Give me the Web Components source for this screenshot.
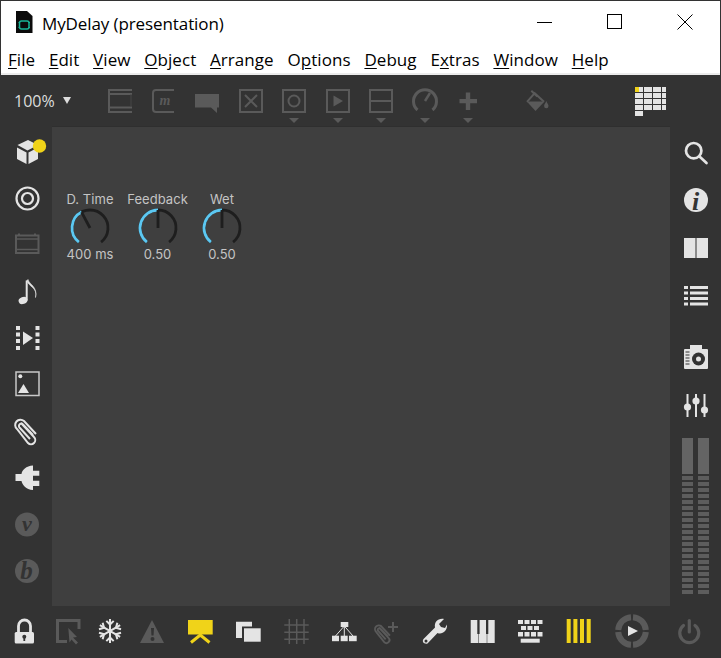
<!DOCTYPE html>
<html>
<head>
<meta charset="utf-8">
<title>MyDelay</title>
<style>
html, body { margin: 0; height: 100%; background: #333; }
</style>
</head>
<body>
<max-window>
  <win-titlebar slot="title">MyDelay (presentation)</win-titlebar>
  <win-menubar slot="menu"></win-menubar>
  <max-toolbar slot="toolbar"></max-toolbar>
  <max-sidebar slot="left" side="left"></max-sidebar>
  <max-canvas slot="canvas">
    <live-dial label="D. Time" value="400 ms" angle="-28"></live-dial>
    <live-dial label="Feedback" value="0.50" angle="0" style="margin-left:7.5px"></live-dial>
    <live-dial label="Wet" value="0.50" angle="0" style="margin-left:4.5px"></live-dial>
  </max-canvas>
  <max-sidebar slot="right" side="right"></max-sidebar>
  <max-footer slot="footer"></max-footer>
</max-window>

<script>
const WHITE = "#e4e4e4";
const DIM = "#5a5a5a";
const YELLOW = "#f0d319";
const BG = "#333";

// icons are drawn in a 32x32 box, centre at 16,16
const BOX = `<rect x="5" y="5" width="22" height="22" fill="none" stroke="${DIM}" stroke-width="2"/>`;
const ICONS = {
  strip: `<g fill="none" stroke="${DIM}"><path d="M4 5H28M4 9H28M4 22.500H28M4 27H28" stroke-width="2"/><path d="M5 5V27" stroke-width="2"/><path d="M27 9V22" stroke="#474747"/></g>`,
  message: `<path d="M26 5H8a3 3 0 0 0-3 3V24a3 3 0 0 0 3 3H26" fill="none" stroke="${DIM}" stroke-width="2"/><text x="17" y="20" font-family="Liberation Serif" font-style="italic" font-weight="700" font-size="14" text-anchor="middle" fill="${DIM}">m</text>`,
  comment: `<path d="M4 9H28V22.500H26V28L20 22.500H4Z" fill="${DIM}"/>`,
  xbox: `${BOX}<path d="M10 10L22 22M22 10L10 22" stroke="${DIM}" stroke-width="2"/>`,
  circlebox: `${BOX}<circle cx="16" cy="16" r="5.500" fill="none" stroke="${DIM}" stroke-width="2"/>`,
  playbox: `${BOX}<path d="M11.500 10.500L21 16L11.500 21.500Z" fill="${DIM}"/>`,
  minusbox: `${BOX}<path d="M6 16H26" stroke="${DIM}" stroke-width="2"/>`,
  dial: `<path d="M8.500 25A11.500 11.500 0 1 1 23.500 25" fill="none" stroke="${DIM}" stroke-width="3"/><path d="M16 16L21 8" stroke="${DIM}" stroke-width="2.500"/>`,
  plus: `<path d="M13.800 7.500H18.200V14H25V18.200H18.200V25H13.800V18.200H7.500V14H13.800Z" fill="${DIM}"/>`,
  bucket: `<path d="M5.800 16.500H23.500L14.500 26Z" fill="${DIM}"/><path d="M6 16.800L13.700 8.200L23 16.800M10.300 5.800L16.300 11.500" fill="none" stroke="${DIM}" stroke-width="2"/><path d="M25.300 16C26 18 27.500 19.500 27.500 21A2.200 2.200 0 0 1 23.100 21C23.100 19.500 24.600 18 25.300 16Z" fill="${DIM}"/>`,
  cube: `<path d="M17 5L27 10L16.500 15.500L6.500 10Z" fill="${WHITE}"/><path d="M6 12.500L15.500 17.500V29L6 24Z" fill="${WHITE}"/><path d="M17.500 17.500L27 12.500V24L17.500 29Z" fill="${WHITE}"/><circle cx="28.500" cy="11" r="6.700" fill="${YELLOW}"/>`,
  target: `<circle cx="16.500" cy="16.500" r="11" fill="none" stroke="${WHITE}" stroke-width="2.200"/><circle cx="16.500" cy="16.500" r="5.500" fill="none" stroke="${WHITE}" stroke-width="2.200"/>`,
  amp: `<path d="M8 5.500V7M24 5.500V7" stroke="${DIM}" stroke-width="2"/><rect x="5" y="7.500" width="22.500" height="17.500" fill="none" stroke="${DIM}" stroke-width="2"/><path d="M6 11H27M6 21.500H27" stroke="${DIM}" stroke-width="1.500"/>`,
  note: `<g transform="translate(0 1.500)"><ellipse cx="12" cy="24" rx="4.500" ry="3.500" transform="rotate(-20 12 24)" fill="${WHITE}"/><path d="M15.700 24V4" stroke="${WHITE}" stroke-width="2"/><path d="M16 4C17 10 27 11 24.500 21C27 10 18 8 17 3Z" fill="${WHITE}" stroke="${WHITE}" stroke-width=".6"/></g>`,
  video: `<g fill="${WHITE}"><rect x="5" y="4" width="4" height="4"/><rect x="5" y="10.500" width="4" height="4"/><rect x="5" y="17" width="4" height="4"/><rect x="5" y="24" width="4" height="4"/><rect x="24.500" y="4" width="4" height="4"/><rect x="24.500" y="10.500" width="4" height="4"/><rect x="24.500" y="17" width="4" height="4"/><rect x="24.500" y="24" width="4" height="4"/><path d="M12 9.500L22 16L12 23Z"/></g>`,
  image: `<rect x="5" y="4" width="23" height="23.500" fill="none" stroke="#c8c8c8" stroke-width="1.500"/><circle cx="9.300" cy="8.300" r="2" fill="${WHITE}"/><path d="M7 25L12.500 16L18 25Z" fill="${WHITE}"/>`,
  clip: `<path d="M10 8L23 22a4 4 0 0 1-6 6L6 14A5 5 0 0 1 13 6L25 19M19 24L8.500 12.500A2 2 0 0 1 12 9.500L22 20" fill="none" stroke="${WHITE}" stroke-width="2"/>`,
  plug: `<path d="M22 3.500V28C15 28 11 22 10.500 19H4.500V12H10.500C11 8 15 4 22 3.500Z" fill="${WHITE}"/><path d="M21 8.700H28.300V13.700H21ZM21 18.700H28.300V24H21Z" fill="${WHITE}"/>`,
  vdev: `<circle cx="16" cy="15.500" r="12" fill="${DIM}"/><text x="16" y="22.200" font-family="Liberation Serif" font-style="italic" font-weight="700" font-size="22" text-anchor="middle" fill="${BG}">v</text>`,
  bdev: `<circle cx="16" cy="16" r="12" fill="${DIM}"/><text x="15.500" y="24.300" font-family="Liberation Serif" font-style="italic" font-weight="700" font-size="25" text-anchor="middle" fill="${BG}">b</text>`,
  search: `<circle cx="13.700" cy="14.700" r="7.700" fill="none" stroke="${WHITE}" stroke-width="2.700"/><path d="M19.500 20.500L26.500 27" stroke="${WHITE}" stroke-width="2.700" stroke-linecap="round"/>`,
  info: `<circle cx="16" cy="16" r="12" fill="${WHITE}"/><text x="15.500" y="25.500" font-family="Liberation Serif" font-style="italic" font-weight="700" font-size="26" text-anchor="middle" fill="${BG}">i</text>`,
  book: `<path d="M4 6H15.500V26H4ZM16.500 6H28V26H16.500Z" fill="${WHITE}"/>`,
  list: `<g fill="${WHITE}"><rect x="4" y="6" width="4" height="3"/><rect x="10" y="6" width="18" height="3"/><rect x="4" y="11.500" width="4" height="3"/><rect x="10" y="11.500" width="18" height="3"/><rect x="4" y="17" width="4" height="3"/><rect x="10" y="17" width="18" height="3"/><rect x="4" y="22.500" width="4" height="3"/><rect x="10" y="22.500" width="18" height="3"/></g>`,
  camera: `<path d="M10 3H22V7H27a1 1 0 0 1 1 1V26a1 1 0 0 1-1 1H5a1 1 0 0 1-1-1V8a1 1 0 0 1 1-1H10Z" fill="${WHITE}"/><circle cx="18.500" cy="17" r="6.500" fill="${BG}"/><circle cx="18.500" cy="17" r="2.500" fill="${WHITE}"/><path d="M5.500 10H9.500M5.500 13H9.500M5.500 16H9.500M5.500 19H9.500M5.500 22H9.500" stroke="${BG}"/>`,
  mixer: `<path d="M7.500 4V27M16 4V27M24.500 4V27" stroke="${WHITE}" stroke-width="2"/><circle cx="7.500" cy="17" r="3.600" fill="${WHITE}"/><circle cx="16" cy="11" r="3.600" fill="${WHITE}"/><circle cx="24.500" cy="20" r="3.600" fill="${WHITE}"/>`,
  lock: `<path d="M10.500 18V11a6 6 0 0 1 12 0V18" fill="none" stroke="${WHITE}" stroke-width="2.800"/><rect x="6.700" y="17" width="19.300" height="11.500" rx="1.500" fill="${WHITE}"/><circle cx="16.300" cy="21.700" r="2" fill="${BG}"/><path d="M16.300 22V26" stroke="${BG}" stroke-width="1.800"/>`,
  select: `<path d="M15 26.500H5.500V5.500H27V14" fill="none" stroke="${DIM}" stroke-width="3"/><path d="M16.300 13L25 22L21 22.500L26 27.500L24 29.500L19.500 24.500L17.500 27.500Z" fill="${DIM}"/>`,
  snow: `<g transform="translate(16 16) scale(.92) translate(-16 -16)" stroke="${WHITE}" stroke-width="2.200" fill="none"><path d="M16 3V29M5 9.500L27 22.500M27 9.500L5 22.500"/><path d="M12 5L16 9L20 5M12 27L16 23L20 27M4 14L9.500 12.500L8 7M28 18L22.500 19.500L24 25M24 7L22.500 12.500L28 14M8 25L9.500 19.500L4 18"/></g>`,
  warn: `<path d="M16 5L28 28H4Z" fill="${DIM}"/><path d="M15 13H18L17.500 20.500H15.500Z" fill="${BG}"/><circle cx="16.500" cy="24" r="2" fill="${BG}"/>`,
  present: `<rect x="4" y="5" width="24.700" height="14.500" fill="${YELLOW}"/><path d="M7 27.500L16.300 20L25.500 27.500" fill="none" stroke="${YELLOW}" stroke-width="3"/>`,
  windows: `<path d="M4 6.700H20V11.500H10V23H4Z" fill="${WHITE}"/><rect x="12" y="13.300" width="16.700" height="13.400" fill="${WHITE}"/>`,
  grid: `<path d="M9.300 4V29M16.700 4V29M24 4V29M4.300 10H28.700M4.300 17.300H28.700M4.300 24.300H28.700" stroke="${DIM}" stroke-width="1.500"/>`,
  tree: `<g fill="${WHITE}"><rect x="12.700" y="7" width="7.600" height="5"/><rect x="4" y="20.700" width="7" height="5.500"/><rect x="12.700" y="20.700" width="7" height="5.500"/><rect x="21" y="20.700" width="7.700" height="5.500"/></g><path d="M16.300 11V21M16.300 11L7.500 21M16.300 11L25 21" stroke="${WHITE}" fill="none"/>`,
  clipadd: `<path d="M10 8L23 22a4 4 0 0 1-6 6L6 14A5 5 0 0 1 13 6L25 19M19 24L8.500 12.500A2 2 0 0 1 12 9.500L22 20" transform="translate(2 7) scale(.72)" fill="none" stroke="${DIM}" stroke-width="2.600"/><path d="M23 7V17M18 12H28" stroke="${DIM}" stroke-width="2"/>`,
  wrench: `<path d="M5.500 24L17 12.500C16 7 20 3 26 4L21 9L23 12L27 13L29 9.500C29.500 16 24 20 19.500 18L9.500 28.500C6.500 29.500 3.500 27 5.500 24Z" fill="${WHITE}"/><circle cx="8" cy="26" r="1.500" fill="${BG}"/>`,
  piano: `<path d="M4.700 5H28.700V28H4.700Z" fill="${WHITE}"/><path d="M11.300 5H13.600V19H11.300ZM20 5H22.300V19H20Z" fill="${BG}"/><path d="M12.500 19V28M21 19V28" stroke="#888"/>`,
  keyboard: `<g fill="${WHITE}"><rect x="4" y="5" width="5" height="4"/><rect x="10.500" y="5" width="5" height="4"/><rect x="17" y="5" width="5" height="4"/><rect x="23.500" y="5" width="5" height="4"/><rect x="7" y="11" width="5" height="4"/><rect x="13.500" y="11" width="5" height="4"/><rect x="20" y="11" width="5" height="4"/><rect x="4" y="17" width="5" height="4.500"/><rect x="10.500" y="17" width="5" height="4.500"/><rect x="17" y="17" width="5" height="4.500"/><rect x="23.500" y="17" width="5" height="4.500"/><rect x="6.700" y="23.700" width="19" height="4"/></g>`,
  bars: `<path d="M4.700 4H8.700V28H4.700ZM11.400 4H15.400V28H11.400ZM18 4H22V28H18ZM24.700 4H28.700V28H24.700Z" fill="${YELLOW}"/>`,
  play: `<g fill="none" stroke="${DIM}" stroke-width="6"><path d="M17 2.200A13.800 13.800 0 0 1 29.800 15M29.800 17A13.800 13.800 0 0 1 17 29.800M15 29.800A13.800 13.800 0 0 1 2.200 17M2.200 15A13.800 13.800 0 0 1 15 2.200"/></g><path d="M12 11L22 16L12 21Z" fill="${WHITE}"/>`,
  power: `<path d="M10.500 10.500A9.500 9.500 0 1 0 22 10.500" fill="none" stroke="${DIM}" stroke-width="3.200" stroke-linecap="round"/><path d="M16.300 5.500V17" stroke="${DIM}" stroke-width="3.200" stroke-linecap="round"/>`
};

class MaxIcon extends HTMLElement {
  constructor() {
    super();
    const root = this.attachShadow({ mode: "open" });
    root.innerHTML = `<style>
:host { display: block; flex: none; width: 32px; height: 32px; position: relative; }
svg { display: block; width: 32px; height: 32px; overflow: visible; }
i { position: absolute; left: 11px; top: 33px; width: 0; height: 0; border-left: 5px solid transparent; border-right: 5px solid transparent; border-top: 5px solid #5a5a5a; }
</style><svg viewBox="0 0 32 32">${ICONS[this.getAttribute("name")] || ""}</svg>${this.hasAttribute("menu") ? "<i></i>" : ""}`;
  }
}
customElements.define("max-icon", MaxIcon);

class WinTitlebar extends HTMLElement {
  constructor() {
    super();
    const root = this.attachShadow({ mode: "open" });
    root.innerHTML = `<style>
:host { display: flex; align-items: center; height: 41px; background: #fff; color: #000; font: 17px "Open Sans", sans-serif; flex: none; }
.doc { margin: 0 9px 0 14px; width: 18px; height: 22px; display: block; }
.title { flex: 1; letter-spacing: -0.1px; padding-top: 3px; }
.btns { display: flex; }
.btn { width: 70px; height: 41px; display: flex; align-items: center; justify-content: center; }
.btn svg { display: block; }
</style>
<svg class="doc" viewBox="0 0 18 22"><path d="M1 0H12L17.500 5V22H1Z" fill="#0b0b0b"/><rect x="4.500" y="10" width="9.500" height="8" rx="2" fill="none" stroke="#19b598" stroke-width="1.500"/><path d="M3.500 11.500H5M13.500 11.500H15M3.500 16.500H5M13.500 16.500H15" stroke="#19b598"/></svg>
<span class="title"><slot></slot></span>
<div class="btns">
  <div class="btn"><svg width="16" height="16"><path d="M0 8.500H15" stroke="#000"/></svg></div>
  <div class="btn"><svg width="16" height="16"><rect x="0.500" y="0.500" width="14" height="14" fill="none" stroke="#000"/></svg></div>
  <div class="btn"><svg width="16" height="16"><path d="M0.500 0.500L15.500 15.500M15.500 0.500L0.500 15.500" stroke="#000"/></svg></div>
</div>`;
  }
}
customElements.define("win-titlebar", WinTitlebar);

class WinMenubar extends HTMLElement {
  constructor() {
    super();
    const items = ["<u>F</u>ile", "<u>E</u>dit", "<u>V</u>iew", "<u>O</u>bject", "<u>A</u>rrange", "O<u>p</u>tions", "<u>D</u>ebug", "E<u>x</u>tras", "<u>W</u>indow", "<u>H</u>elp"];
    const root = this.attachShadow({ mode: "open" });
    root.innerHTML = `<style>
:host { display: flex; flex: none; height: 31px; box-sizing: border-box; padding: 4px 0 0 7px; gap: 13.8px; background: #fff; color: #000; font: 17px "Open Sans", sans-serif; letter-spacing: 0.05px; align-items: center; }
u { text-underline-offset: 2px; text-decoration-thickness: 1px; }
</style>${items.map((t) => `<span>${t}</span>`).join("")}`;
  }
}
customElements.define("win-menubar", WinMenubar);

class MaxToolbar extends HTMLElement {
  constructor() {
    super();
    const root = this.attachShadow({ mode: "open" });
    const icons = [["strip"], ["message"], ["comment"], ["xbox"], ["circlebox", 1], ["playbox", 1], ["minusbox", 1], ["dial", 1], ["plus", 1]];
    let cells = "";
    for (let j = 0; j < 4; j++) {
      for (let c = 0; c < 7; c++) {
        cells += `<b${j === 0 && c === 0 ? ' class="on"' : ""}></b>`;
      }
    }
    cells += "<b></b><b></b>";
    root.innerHTML = `<style>
:host { display: flex; align-items: center; flex: none; height: 53px; background: #333; border-top: 2px solid #ececec; box-sizing: border-box; color: #ddd; font: 16px "Open Sans", sans-serif; }
.zoom { width: 49px; margin-left: 13px; }
.arrow { width: 0; height: 0; border-left: 4.500px solid transparent; border-right: 4.500px solid transparent; border-top: 7px solid #ddd; margin-right: 33px; }
.tools { display: flex; gap: 11.500px; }
.bucket { margin-left: 37px; }
.grid { margin: 2px 0 0 82px; display: grid; grid-template-columns: repeat(7, 3.700px); grid-auto-rows: 4.700px; column-gap: .8px; row-gap: 1.200px; width: 31px; }
.grid b { display: block; background: #e4e4e4; }
.grid b.on { background: #f0d319; }
</style>
<span class="zoom">100%</span><span class="arrow"></span>
<div class="tools">${icons.map(([n, m]) => `<max-icon name="${n}" ${m ? "menu" : ""}></max-icon>`).join("")}</div>
<max-icon class="bucket" name="bucket"></max-icon>
<div class="grid">${cells}</div>`;
  }
}
customElements.define("max-toolbar", MaxToolbar);

class MaxSidebar extends HTMLElement {
  constructor() {
    super();
    const root = this.attachShadow({ mode: "open" });
    const left = this.getAttribute("side") === "left";
    const names = left
      ? ["cube", "target", "amp", "note", "video", "image", "clip", "plug", "vdev", "bdev"]
      : ["search", "info", "book", "list", "camera", "mixer"];
    const items = names.map((n, i) => `<max-icon name="${n}" ${!left && i === 4 ? 'style="margin-top:14px"' : ""}></max-icon>`).join("");
    let segs = "";
    for (let i = 0; i < 20; i++) segs += "<b></b>";
    const meter = `<div class="meters"><div class="meter"><em></em>${segs}</div><div class="meter"><em></em>${segs}</div></div>`;
    root.innerHTML = `<style>
:host { display: flex; flex-direction: column; align-items: center; box-sizing: border-box; background: #333; width: ${left ? 51 : 50}px; padding-top: ${left ? 9 : 10}px; ${left ? "" : "padding-left: 1px;"} gap: ${left ? 14.700 : 16}px; }
.meters { display: flex; gap: 5px; }
.meter { width: 11px; display: flex; flex-direction: column; gap: 2px; }
.meter em { display: block; height: 36px; background: #646464; }
.meter b { display: block; height: 4px; background: #5d5d5d; }
</style>${items}${left ? "" : meter}`;
  }
}
customElements.define("max-sidebar", MaxSidebar);

class MaxCanvas extends HTMLElement {
  constructor() {
    super();
    const root = this.attachShadow({ mode: "open" });
    root.innerHTML = `<style>
:host { display: flex; align-items: flex-start; flex: 1; background: #3f3f3f; padding: 65px 0 0 8px; box-sizing: border-box; border-top: 1px solid #2f2f2f; }
</style><slot></slot>`;
  }
}
customElements.define("max-canvas", MaxCanvas);

class LiveDial extends HTMLElement {
  constructor() {
    super();
    const root = this.attachShadow({ mode: "open" });
    const cx = 22, cy = 22, r = 18;
    const pt = (deg) => {
      const a = (deg - 90) * Math.PI / 180;
      return [cx + r * Math.cos(a), cy + r * Math.sin(a)].map((v) => v.toFixed(2)).join(" ");
    };
    const ang = Number(this.getAttribute("angle"));
    root.innerHTML = `<style>
:host { display: flex; flex-direction: column; align-items: center; width: 60px; color: #c4c4c4; font: 13px Inter, sans-serif; line-height: 15px; letter-spacing: .05px; }
svg { display: block; margin: -1px 0 -3px; }
</style>
<span>${this.getAttribute("label")}</span>
<svg width="44" height="44" viewBox="0 0 44 44">
  <path d="M${pt(-142)} A${r} ${r} 0 1 1 ${pt(142)}" fill="none" stroke="#1e1e1e" stroke-width="2.800"/>
  <path d="M${pt(-142)} A${r} ${r} 0 0 1 ${pt(ang)}" fill="none" stroke="#5cc8f2" stroke-width="2.800"/>
  <path d="M${cx} ${cy}L${pt(ang)}" stroke="#1e1e1e" stroke-width="2.800"/>
</svg>
<span>${this.getAttribute("value")}</span>`;
  }
}
customElements.define("live-dial", LiveDial);

class MaxFooter extends HTMLElement {
  constructor() {
    super();
    const root = this.attachShadow({ mode: "open" });
    const names = ["lock", "select", "snow", "warn", "present", "windows", "grid", "tree", "clipadd", "wrench", "piano", "keyboard", "bars", "play", "power"];
    const gaps = [0, 12, 10, 10, 16, 16, 16, 16, 10, 16, 16, 16, 16, 22, 25];
    root.innerHTML = `<style>
:host { display: flex; align-items: center; flex: none; height: 52px; background: #333; padding: 0 0 2px 7px; box-sizing: border-box; }
</style>${names.map((n, i) => `<max-icon name="${n}" style="margin-left:${gaps[i]}px"></max-icon>`).join("")}`;
  }
}
customElements.define("max-footer", MaxFooter);

class MaxWindow extends HTMLElement {
  constructor() {
    super();
    const root = this.attachShadow({ mode: "open" });
    root.innerHTML = `<style>
:host { display: flex; flex-direction: column; height: 658px; width: 721px; box-sizing: border-box; border: 1px solid #333; border-bottom: 0; overflow: hidden; background: #333; }
.mid { display: flex; flex: 1; min-height: 0; }
.mid ::slotted([slot="canvas"]) { flex: 1; }
</style>
<slot name="title"></slot>
<slot name="menu"></slot>
<slot name="toolbar"></slot>
<div class="mid"><slot name="left"></slot><slot name="canvas"></slot><slot name="right"></slot></div>
<slot name="footer"></slot>`;
  }
}
customElements.define("max-window", MaxWindow);
</script>
</body>
</html>
